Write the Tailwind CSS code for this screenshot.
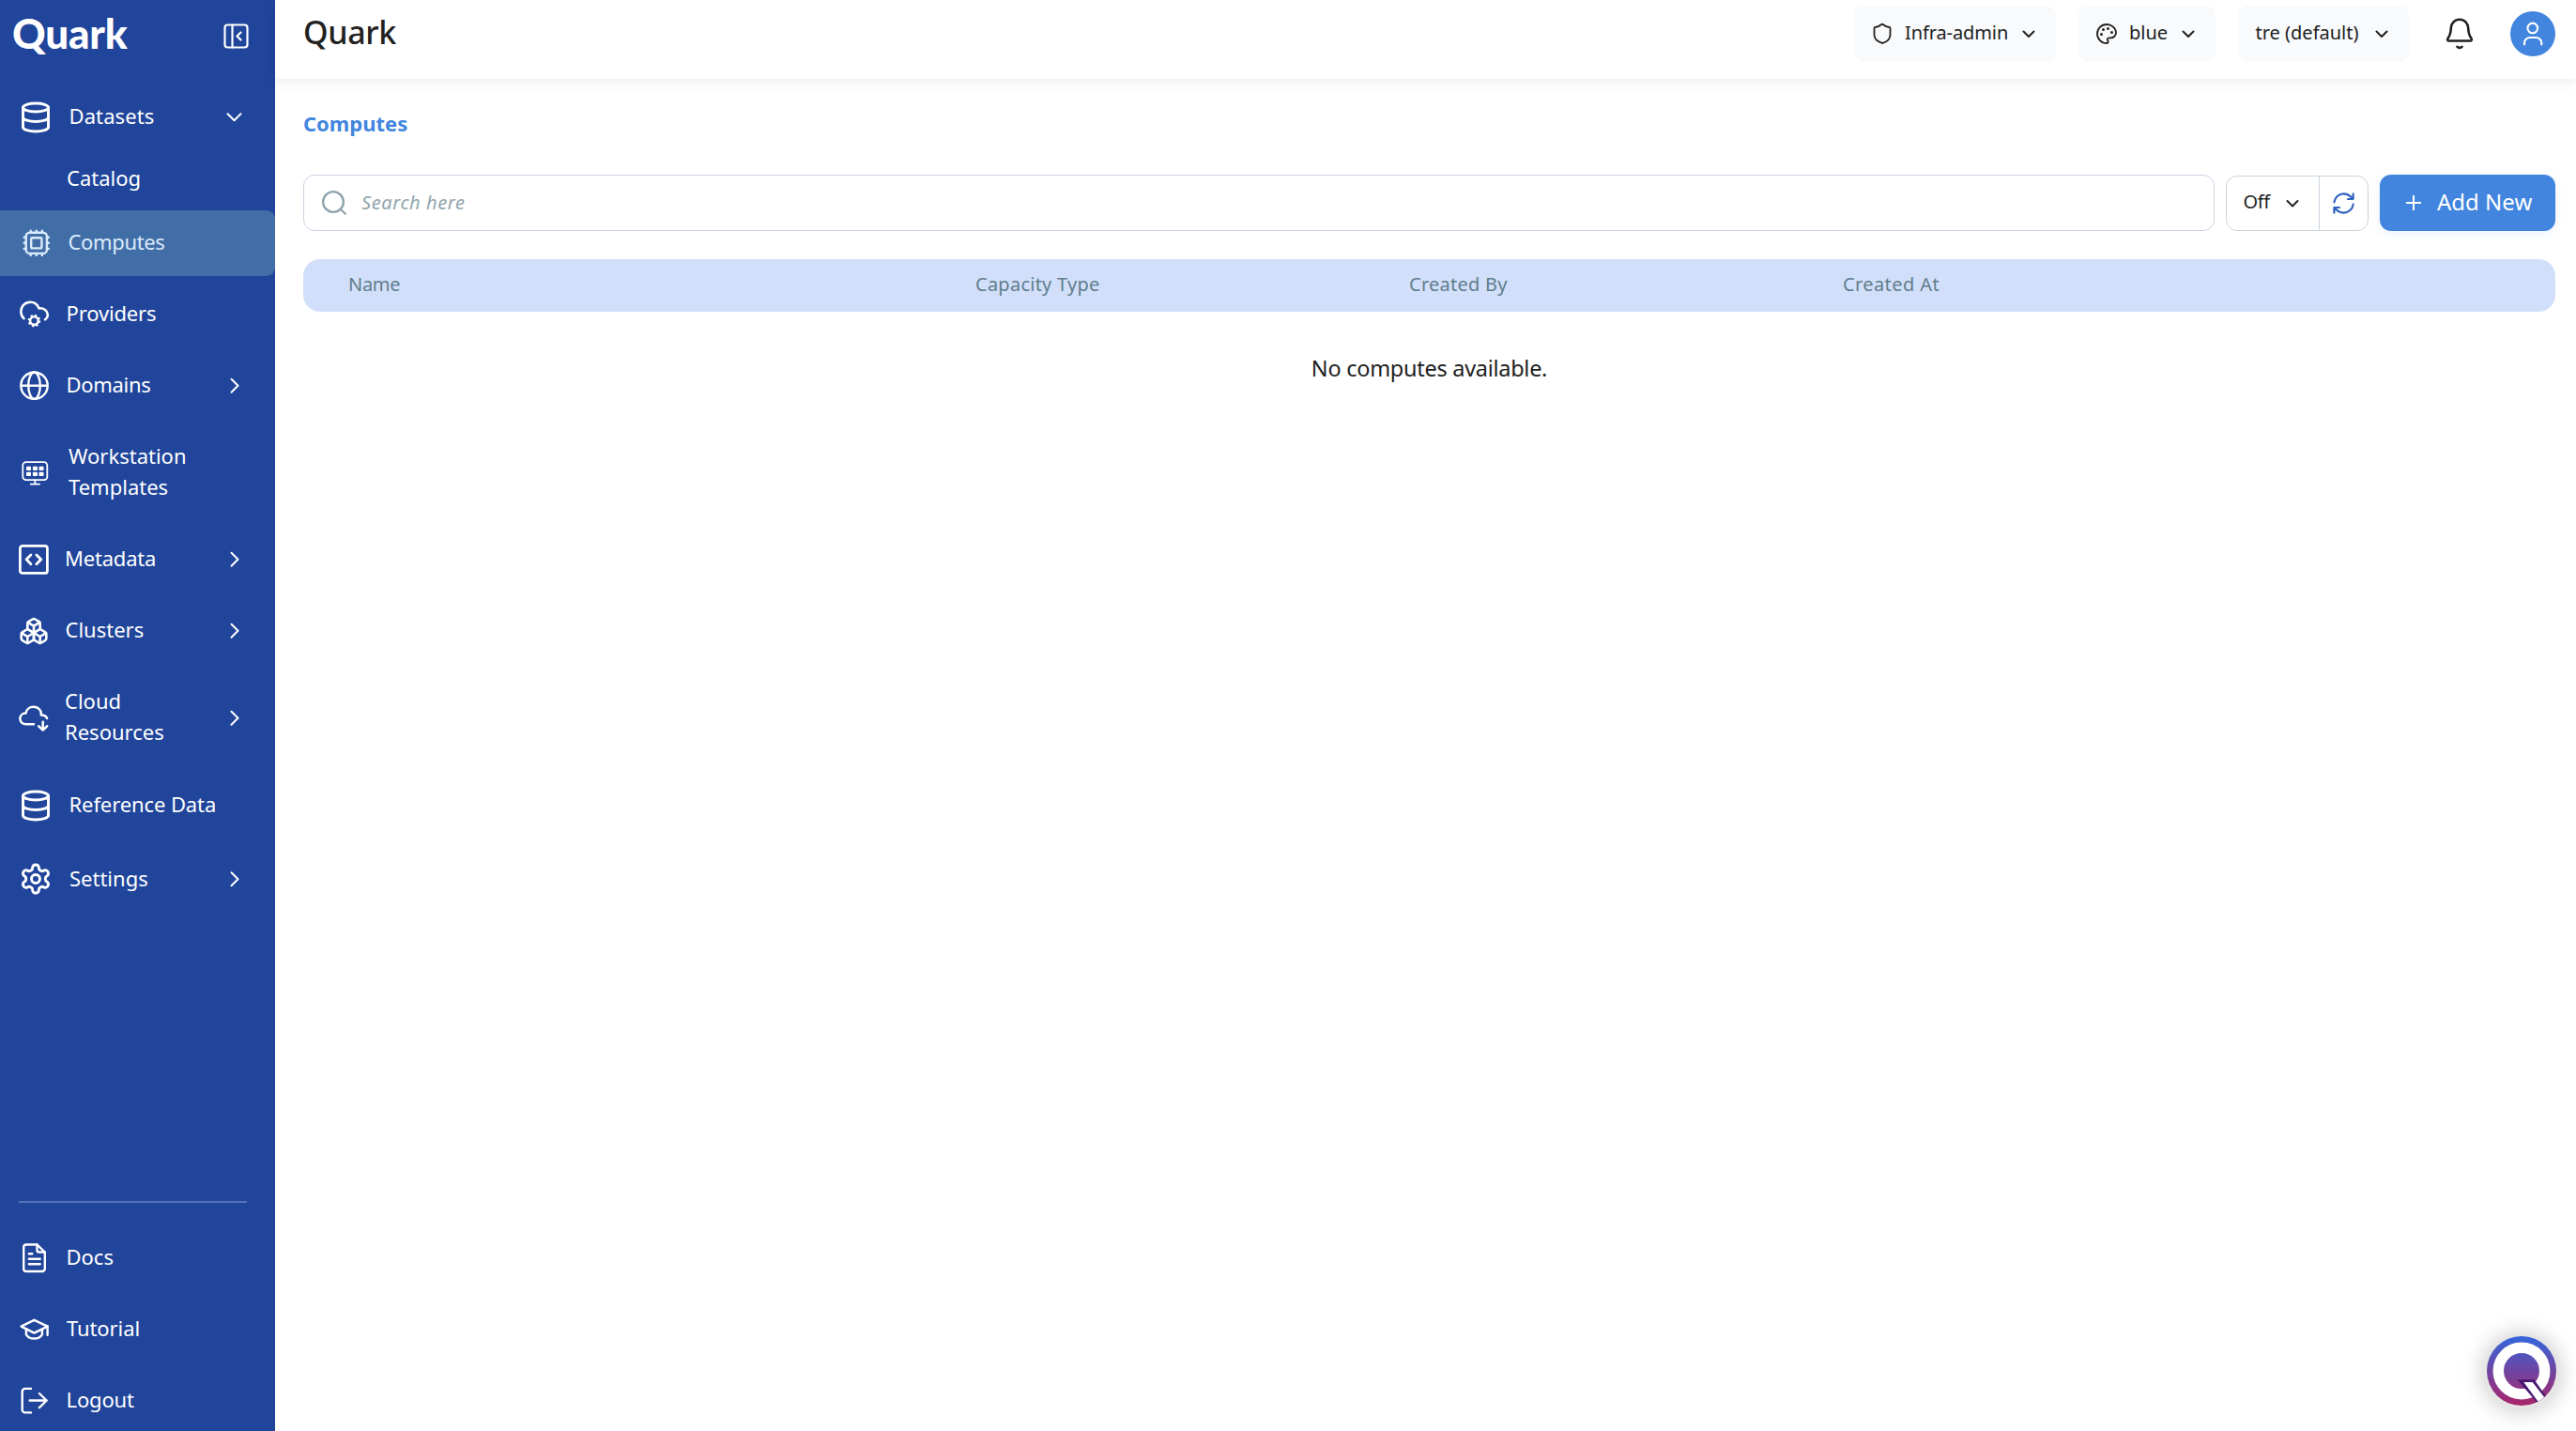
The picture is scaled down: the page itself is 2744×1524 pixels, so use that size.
<!DOCTYPE html>
<html lang="en">
  <head>
    <meta charset="UTF-8" />
    <meta name="viewport" content="width=device-width, initial-scale=1.0" />
    <title>Quark - Computes</title>
    <script src="https://cdn.jsdelivr.net/npm/@tailwindcss/browser@4"></script>
  </head>
  <body class="flex h-screen overflow-hidden bg-white font-['Noto_Sans',sans-serif] text-[#212121] antialiased">
    <!--==============  SIDEBAR  ==============-->
    <aside class="flex h-full w-[293px] shrink-0 flex-col overflow-hidden bg-[#20459b] text-[22px] leading-[33px] text-white">
      <div class="flex h-[77px] shrink-0 items-center justify-between pl-[13px] pr-7">
        <span class="pb-[7px] font-[Lato,sans-serif] text-[44px] leading-[60px] font-black tracking-[-0.2px]">Quark</span>
        <svg class="size-7" viewBox="0 0 28 28" fill="none" stroke="currentColor" stroke-width="2.2" stroke-linecap="round" stroke-linejoin="round">
          <rect x="2.5" y="1.5" width="24" height="24" rx="3" />
          <path d="M10.5 1.5v24M19.5 9.5l-4 4 4 4" />
        </svg>
      </div>

      <nav class="flex flex-col gap-1.5 pt-3">
        <a class="flex h-[72px] items-center pl-5 pr-[34px]">
          <svg class="size-9 shrink-0" viewBox="0 0 24 24" fill="none" stroke="currentColor" stroke-width="1.95" stroke-linecap="round" stroke-linejoin="round">
            <ellipse cx="12" cy="5" rx="9" ry="3" />
            <path d="M3 5v14a9 3 0 0 0 18 0V5M3 12a9 3 0 0 0 18 0" />
          </svg>
          <span class="ml-[17.5px] grow pb-[3px] tracking-[0.1px]">Datasets</span>
          <svg class="h-4 w-5" viewBox="0 0 20 16" fill="none" stroke="currentColor" stroke-width="2" stroke-linecap="round" stroke-linejoin="round"><path d="M3.5 4.2l7 7 7-7" /></svg>
        </a>
        <a class="mb-1 flex h-[47px] items-center pl-[71px]"><span class="pb-[3px]">Catalog</span></a>
        <a class="flex h-[70px] items-center rounded-r-[9px] bg-[#426ea7] pl-5 text-[#d9ebfc]">
          <svg class="size-9 shrink-0" viewBox="0 0 36 36" fill="none" stroke="currentColor" stroke-width="2.4" stroke-linecap="round" stroke-linejoin="round">
            <rect x="7.7" y="6.7" width="22.2" height="22.2" rx="4" />
            <rect x="13.2" y="12.2" width="11.2" height="11.2" rx="1" />
            <path d="M12.7 6.5V4.7M18.8 6.5V4.7M24.9 6.5V4.7M12.7 29v1.9M18.8 29v1.9M24.9 29v1.9M7.5 11.7H5.7M7.5 17.8H5.7M7.5 23.9H5.7M30 11.7h1.8M30 17.8h1.8M30 23.9h1.8" />
          </svg>
          <span class="ml-[16.5px] pb-[3px] tracking-[-0.35px]">Computes</span>
        </a>
        <a class="flex h-[70px] items-center pl-5">
          <svg class="size-8 shrink-0" viewBox="0 0 32 32" fill="none" stroke="currentColor" stroke-width="2.5" stroke-linecap="round" stroke-linejoin="round">
            <path d="M5.5 20.3C3.2 18.3 2.3 15.6 2.3 12.8 2.3 7.2 6.8 2.8 12.3 2.8c4.2 0 7.7 2.7 9.1 6.6 5.3-.6 9.4 2.6 9.4 7.2 0 2-1 3.7-2.8 4.7" />
            <circle cx="16.4" cy="22.6" r="4.3" />
            <circle cx="16.4" cy="22.6" r="5.9" stroke-width="1.8" stroke-dasharray="2.2 2.43" stroke-linecap="butt" />
          </svg>
          <span class="ml-[18.5px] pb-[3px] tracking-[-0.15px]">Providers</span>
        </a>
        <a class="flex h-[70px] items-center pl-5 pr-[34px]">
          <svg class="size-8 shrink-0" viewBox="0 0 32 32" fill="none" stroke="currentColor" stroke-width="2.4">
            <circle cx="16.5" cy="15.7" r="14.2" />
            <ellipse cx="16.5" cy="15.7" rx="6.3" ry="14.2" />
            <path d="M2.3 15.7h28.4" />
          </svg>
          <span class="ml-[18.5px] grow pb-[3px] tracking-[-0.3px]">Domains</span>
          <svg class="h-5 w-4" viewBox="0 0 16 20" fill="none" stroke="currentColor" stroke-width="2" stroke-linecap="round" stroke-linejoin="round"><path d="M3.5 2.7l7 7-7 7" /></svg>
        </a>
        <a class="flex h-[103px] items-center pl-5">
          <svg class="size-[34px] shrink-0" viewBox="0 0 34 34" fill="none" stroke="currentColor" stroke-width="1.8" stroke-linecap="round">
            <rect x="4.3" y="5.2" width="26" height="19" rx="3.5" />
            <path d="M17.3 24.5v4M12.8 28.7h9.2" />
            <g fill="currentColor" stroke="none">
              <rect x="8" y="9.7" width="5" height="4.3" rx=".8" /><rect x="14.9" y="9.7" width="5" height="4.3" rx=".8" /><rect x="21.5" y="9.7" width="5" height="4.3" rx=".8" />
              <rect x="8" y="15.7" width="5" height="4.3" rx=".8" /><rect x="14.9" y="15.7" width="5" height="4.3" rx=".8" /><rect x="21.5" y="15.7" width="5" height="4.3" rx=".8" />
            </g>
          </svg>
          <span class="ml-[19px] pb-[3px]">Workstation<br />Templates</span>
        </a>
        <a class="flex h-[70px] items-center pl-5 pr-[34px]">
          <svg class="size-8 shrink-0" viewBox="0 0 32 32" fill="none" stroke="currentColor" stroke-width="2.8" stroke-linecap="round" stroke-linejoin="round">
            <rect x="1.4" y="1.4" width="29" height="29" rx="2.5" />
            <path d="M12.9 10.9L8.1 15.8l4.8 4.9M18.9 10.9l4.8 4.9-4.8 4.9" />
          </svg>
          <span class="ml-[17px] grow pb-[3px] tracking-[-0.2px]">Metadata</span>
          <svg class="h-5 w-4" viewBox="0 0 16 20" fill="none" stroke="currentColor" stroke-width="2" stroke-linecap="round" stroke-linejoin="round"><path d="M3.5 2.7l7 7-7 7" /></svg>
        </a>
        <a class="flex h-[70px] items-center pl-5 pr-[34px]">
          <svg class="size-8 shrink-0" viewBox="0 0 24 24" fill="none" stroke="currentColor" stroke-width="1.95" stroke-linecap="round" stroke-linejoin="round">
            <path d="M2.97 12.92A2 2 0 0 0 2 14.63v3.24a2 2 0 0 0 .97 1.71l3 1.8a2 2 0 0 0 2.06 0L12 19v-5.5l-5-3-4.03 2.42Z" />
            <path d="M7 16.5l-4.74-2.85M7 16.5l5-3M7 16.5v5.17" />
            <path d="M12 13.5V19l3.97 2.38a2 2 0 0 0 2.06 0l3-1.8a2 2 0 0 0 .97-1.71v-3.24a2 2 0 0 0-.97-1.71L17 10.5l-5 3Z" />
            <path d="M17 16.5l-5-3M17 16.5l4.74-2.85M17 16.5v5.17" />
            <path d="M7.97 4.42A2 2 0 0 0 7 6.13v4.37l5 3 5-3V6.13a2 2 0 0 0-.97-1.71l-3-1.8a2 2 0 0 0-2.06 0l-3 1.8Z" />
            <path d="M12 8L7.26 5.15M12 8l4.74-2.85M12 13.5V8" />
          </svg>
          <span class="ml-[17.5px] grow pb-[3px]">Clusters</span>
          <svg class="h-5 w-4" viewBox="0 0 16 20" fill="none" stroke="currentColor" stroke-width="2" stroke-linecap="round" stroke-linejoin="round"><path d="M3.5 2.7l7 7-7 7" /></svg>
        </a>
        <a class="flex h-[103px] items-center pl-5 pr-[34px]">
          <svg class="size-8 shrink-0" viewBox="0 0 32 32" fill="none" stroke="currentColor" stroke-width="2.5" stroke-linecap="round" stroke-linejoin="round">
            <path d="M16 22.3H7.5C4 22.3 1.3 19.6 1.3 16.3c0-3.1 2.6-5.6 6.2-5.7C8 6.6 11.5 3.8 15.8 3.8c4.5 0 8 3.2 8 7 0 .6 0 1-.1 1.6 3.2-.1 5.6 1.3 6.3 3.6" />
            <path d="M25.7 19.8v8.2M21.2 24.3l4.5 4.2 4.5-4.2" />
          </svg>
          <span class="ml-[17px] grow pb-[3px]">Cloud<br />Resources</span>
          <svg class="h-5 w-4" viewBox="0 0 16 20" fill="none" stroke="currentColor" stroke-width="2" stroke-linecap="round" stroke-linejoin="round"><path d="M3.5 2.7l7 7-7 7" /></svg>
        </a>
        <a class="flex h-[72px] items-center pl-5">
          <svg class="size-9 shrink-0" viewBox="0 0 24 24" fill="none" stroke="currentColor" stroke-width="1.95" stroke-linecap="round" stroke-linejoin="round">
            <ellipse cx="12" cy="5" rx="9" ry="3" />
            <path d="M3 5v14a9 3 0 0 0 18 0V5M3 12a9 3 0 0 0 18 0" />
          </svg>
          <span class="ml-[17.5px] pb-[3px] tracking-[-0.1px]">Reference Data</span>
        </a>
        <a class="flex h-[72px] items-center pl-5 pr-[34px]">
          <svg class="size-9 shrink-0" viewBox="0 0 24 24" fill="none" stroke="currentColor" stroke-width="1.95" stroke-linecap="round" stroke-linejoin="round">
            <path d="M12.22 2h-.44a2 2 0 0 0-2 2v.18a2 2 0 0 1-1 1.73l-.43.25a2 2 0 0 1-2 0l-.15-.08a2 2 0 0 0-2.73.73l-.22.38a2 2 0 0 0 .73 2.73l.15.1a2 2 0 0 1 1 1.72v.51a2 2 0 0 1-1 1.74l-.15.09a2 2 0 0 0-.73 2.73l.22.38a2 2 0 0 0 2.73.73l.15-.08a2 2 0 0 1 2 0l.43.25a2 2 0 0 1 1 1.73V20a2 2 0 0 0 2 2h.44a2 2 0 0 0 2-2v-.18a2 2 0 0 1 1-1.73l.43-.25a2 2 0 0 1 2 0l.15.08a2 2 0 0 0 2.73-.73l.22-.39a2 2 0 0 0-.73-2.73l-.15-.08a2 2 0 0 1-1-1.74v-.5a2 2 0 0 1 1-1.74l.15-.09a2 2 0 0 0 .73-2.73l-.22-.38a2 2 0 0 0-2.73-.73l-.15.08a2 2 0 0 1-2 0l-.43-.25a2 2 0 0 1-1-1.73V4a2 2 0 0 0-2-2z" />
            <circle cx="12" cy="12" r="3" />
          </svg>
          <span class="ml-[18px] grow pb-0.5">Settings</span>
          <svg class="h-5 w-4" viewBox="0 0 16 20" fill="none" stroke="currentColor" stroke-width="2" stroke-linecap="round" stroke-linejoin="round"><path d="M3.5 3.2l7 7-7 7" /></svg>
        </a>
      </nav>

      <!-- Footer links -->
      <div class="mt-[307px] ml-5 h-0.5 w-[243px] shrink-0 bg-white/25"></div>
      <nav class="flex flex-col gap-1.5 pt-6">
        <a class="flex h-[70px] shrink-0 items-center pl-5">
          <svg class="size-8 shrink-0" viewBox="0 0 32 32" fill="none" stroke="currentColor" stroke-width="2.4" stroke-linecap="round" stroke-linejoin="round">
            <path d="M19.5 1.5H8a2.8 2.8 0 0 0-2.8 2.8v22.9A2.8 2.8 0 0 0 8 30h17a2.8 2.8 0 0 0 2.8-2.8V9.5z" />
            <path d="M19.5 1.5v6a2 2 0 0 0 2 2h6.3M10.8 11.2h3.5M10.8 16.8h11.9M10.8 22.2h11.9" />
          </svg>
          <span class="ml-[18.5px] pb-[3px]">Docs</span>
        </a>
        <a class="flex h-[70px] shrink-0 items-center pl-5">
          <svg class="size-8 shrink-0" viewBox="0 0 32 32" fill="none" stroke="currentColor" stroke-width="2.4" stroke-linecap="round" stroke-linejoin="round">
            <path d="M2.6 12.6l13.8-6.8 14.3 6.8-14.3 7z" />
            <path d="M7.9 15.7v5.5c1.5 2.8 5 4.3 8.5 4.3s7-1.5 8.5-4.3v-5.5M30.6 12.6v9.2" />
          </svg>
          <span class="ml-[19px] pb-[3px] tracking-[-0.1px]">Tutorial</span>
        </a>
        <a class="flex h-[70px] shrink-0 items-center pl-5">
          <svg class="size-8 shrink-0" viewBox="0 0 32 32" fill="none" stroke="currentColor" stroke-width="2.4" stroke-linecap="round" stroke-linejoin="round">
            <path d="M13 2.9H6.7a3 3 0 0 0-3 3v19.5a3 3 0 0 0 3 3H13M11.7 15.5h18M21.9 8l7.8 7.5-7.8 7.6" />
          </svg>
          <span class="ml-[18.5px] pb-1 tracking-[-0.15px]">Logout</span>
        </a>
      </nav>
    </aside>

    <div class="flex min-w-0 grow flex-col">
      <!--==============  HEADER  ==============-->
      <header class="flex h-[84px] shrink-0 items-center bg-white pb-3 pl-[30px] pr-[22px] shadow-[0_4px_12px_rgba(0,0,0,0.07)]">
        <h1 class="grow pb-1 text-[34px] leading-10 font-medium tracking-[-0.4px]">Quark</h1>
        <div class="flex gap-6 text-[20px] leading-7">
          <button class="flex h-[60px] w-[215px] items-center rounded-[10px] bg-[#f8fafc] pl-[18px]">
            <svg class="size-6" viewBox="0 0 24 24" fill="none" stroke="currentColor" stroke-width="1.8" stroke-linecap="round" stroke-linejoin="round"><path d="M20.5 13c0 5-3.7 7.5-7.9 8.95a1 1 0 0 1-.67-.01C7.5 20.5 3.5 18 3.5 13V6a1 1 0 0 1 1-1c2 0 4.7-1.2 6.44-2.72a1.6 1.6 0 0 1 2.12 0C14.8 3.81 17.5 5 19.5 5a1 1 0 0 1 1 1z" /></svg>
            <span class="ml-3 pb-0.5 tracking-[-0.1px]">Infra-admin</span>
            <svg class="ml-[14px] h-3 w-4" viewBox="0 0 16 12" fill="none" stroke="currentColor" stroke-width="2" stroke-linecap="round" stroke-linejoin="round"><path d="M2.5 3.5l5.5 5.5 5.5-5.5" /></svg>
          </button>
          <button class="flex h-[60px] w-[146px] items-center rounded-[10px] bg-[#f8fafc] pl-[18px]">
            <svg class="size-6" viewBox="0 0 24 24" fill="none" stroke="currentColor" stroke-width="1.8" stroke-linecap="round" stroke-linejoin="round">
              <path d="M12 2C6.5 2 2 6.5 2 12s4.5 10 10 10c.926 0 1.648-.746 1.648-1.688 0-.437-.18-.835-.437-1.125-.29-.289-.438-.652-.438-1.125a1.64 1.64 0 0 1 1.668-1.668h1.996c3.051 0 5.555-2.503 5.555-5.554C21.965 6.012 17.461 2 12 2z" />
              <g fill="currentColor"><circle cx="13.5" cy="6.5" r=".6" /><circle cx="17.5" cy="10.5" r=".6" /><circle cx="8.5" cy="7.5" r=".6" /><circle cx="6.5" cy="12.5" r=".6" /></g>
            </svg>
            <span class="ml-3 pb-0.5">blue</span>
            <svg class="ml-[14px] h-3 w-4" viewBox="0 0 16 12" fill="none" stroke="currentColor" stroke-width="2" stroke-linecap="round" stroke-linejoin="round"><path d="M2.5 3.5l5.5 5.5 5.5-5.5" /></svg>
          </button>
          <button class="flex h-[60px] w-[182px] items-center rounded-[10px] bg-[#f8fafc] pl-[18.5px]">
            <span class="pb-0.5">tre (default)</span>
            <svg class="ml-[17px] h-3 w-4" viewBox="0 0 16 12" fill="none" stroke="currentColor" stroke-width="2" stroke-linecap="round" stroke-linejoin="round"><path d="M2.5 3.5l5.5 5.5 5.5-5.5" /></svg>
          </button>
        </div>
        <svg class="ml-9 size-9" viewBox="0 0 36 36" fill="none" stroke="currentColor" stroke-width="2.6" stroke-linecap="round" stroke-linejoin="round">
          <path d="M18 2.7c-5.2 0-9 4-9.2 9.3-.2 5-.8 7.5-3.2 10.8-1 1.5-.3 2.7 1 2.7h22.8c1.3 0 2-1.2 1-2.7-2.4-3.3-3-5.8-3.2-10.8-.2-5.3-4-9.3-9.2-9.3zM15.5 31.8c1.3 1.4 3.7 1.4 5 0" />
        </svg>
        <div class="ml-9 size-12 rounded-full bg-[#4285de]">
          <svg class="size-12" viewBox="0 0 48 48" fill="none" stroke="#fff" stroke-width="2.1" stroke-linecap="round">
            <circle cx="23.8" cy="17.9" r="5.3" />
            <path d="M15 35.5v-1.7a5.8 5.8 0 0 1 5.8-5.8h6.7a5.8 5.8 0 0 1 5.8 5.8v1.7" />
          </svg>
        </div>
      </header>

      <!--==============  MAIN CONTENT  ==============-->
      <main class="flex flex-col pl-[30px] pr-[22px] pt-[31px]">
        <h2 class="h-8 text-[22px] leading-8 font-bold text-[#4285de]">Computes</h2>

        <!-- Toolbar -->
        <div class="mt-[39px] flex h-[60px] items-center gap-3">
          <div class="flex h-[60px] w-[2036px] items-center rounded-xl border border-[#cbd3e0] pl-[17px] text-[#90a4ae]">
            <svg class="size-[30px]" viewBox="0 0 24 24" fill="none" stroke="currentColor" stroke-width="1.9" stroke-linecap="round"><circle cx="11.2" cy="11.2" r="8.7" /><path d="M21.4 21.4l-4-4" /></svg>
            <span class="ml-[14px] pb-px text-[20px] leading-7 tracking-[0.6px] italic">Search here</span>
          </div>
          <div class="mt-px flex h-[59px] w-[152px] rounded-xl border border-[#cbd3dc]">
            <button class="flex w-[99px] items-center border-r border-[#cbd3dc] pl-[17.5px]">
              <span class="pb-[3px] text-[20px] leading-7 tracking-[-0.4px]">Off</span>
              <svg class="ml-4 h-3 w-4" viewBox="0 0 16 12" fill="none" stroke="currentColor" stroke-width="2" stroke-linecap="round" stroke-linejoin="round"><path d="M2.5 3l5.5 5.5 5.5-5.5" /></svg>
            </button>
            <button class="flex grow items-center justify-center text-[#2f62c0]">
              <svg class="size-[27px]" viewBox="0 0 24 24" fill="none" stroke="currentColor" stroke-width="1.9" stroke-linecap="round" stroke-linejoin="round">
                <path d="M3 11a9 9 0 0 1 9-8 9.75 9.75 0 0 1 6.74 2.74L21 8M21 3v5h-5M21 13a9 9 0 0 1-9 8 9.75 9.75 0 0 1-6.74-2.74L3 16M8 16H3v5" />
              </svg>
            </button>
          </div>
          <button class="flex h-[60px] w-[187px] items-center rounded-xl bg-[#4285de] pl-[27px] text-white shadow-[0_2px_10px_rgba(66,133,222,0.12)]">
            <svg class="size-[18px]" viewBox="0 0 18 18" fill="none" stroke="currentColor" stroke-width="2"><path d="M9 1v16M1 9h16" /></svg>
            <span class="ml-4 pb-0.5 text-[24px] leading-8">Add New</span>
          </button>
        </div>

        <!-- Table -->
        <div class="mt-[30px] flex h-14 items-center rounded-[18px] bg-[#d2dffa] pl-12 text-[20px] leading-7 text-[#607d8b]">
          <span class="w-[668px] pb-0.5 tracking-[-0.3px]">Name</span>
          <span class="w-[462px] pb-0.5 tracking-[0.25px]">Capacity Type</span>
          <span class="w-[462px] pb-0.5 tracking-[0.25px]">Created By</span>
          <span class="pb-0.5 tracking-[0.4px]">Created At</span>
        </div>
        <p class="mt-11 text-center text-[23.5px] leading-8 tracking-[-0.28px]">No computes available.</p>
      </main>
    </div>

    <!-- Assistant button -->
    <div class="fixed right-[17px] bottom-[23px] size-[82px] rounded-full bg-[#e6e6e6] shadow-[0_2px_24px_rgba(0,0,0,0.22)]">
      <svg class="size-[82px]" viewBox="-41 -41 82 82">
        <defs>
          <linearGradient id="ring" x1="0" y1="0" x2="0" y2="1">
            <stop offset="0" stop-color="#3366dc" />
            <stop offset="1" stop-color="#aa2468" />
          </linearGradient>
          <clipPath id="disc"><circle r="37" /></clipPath>
        </defs>
        <circle r="37" fill="url(#ring)" />
        <circle r="24.7" fill="none" stroke="#fff" stroke-width="11.5" />
        <g clip-path="url(#disc)">
          <path d="M-4.5 9.2H13.5L27 28.5 17.5 35z" fill="#47176f" />
          <path d="M2.3 12h9.4L25 29l-5 7z" fill="#fff" />
        </g>
      </svg>
    </div>
  </body>
</html>
